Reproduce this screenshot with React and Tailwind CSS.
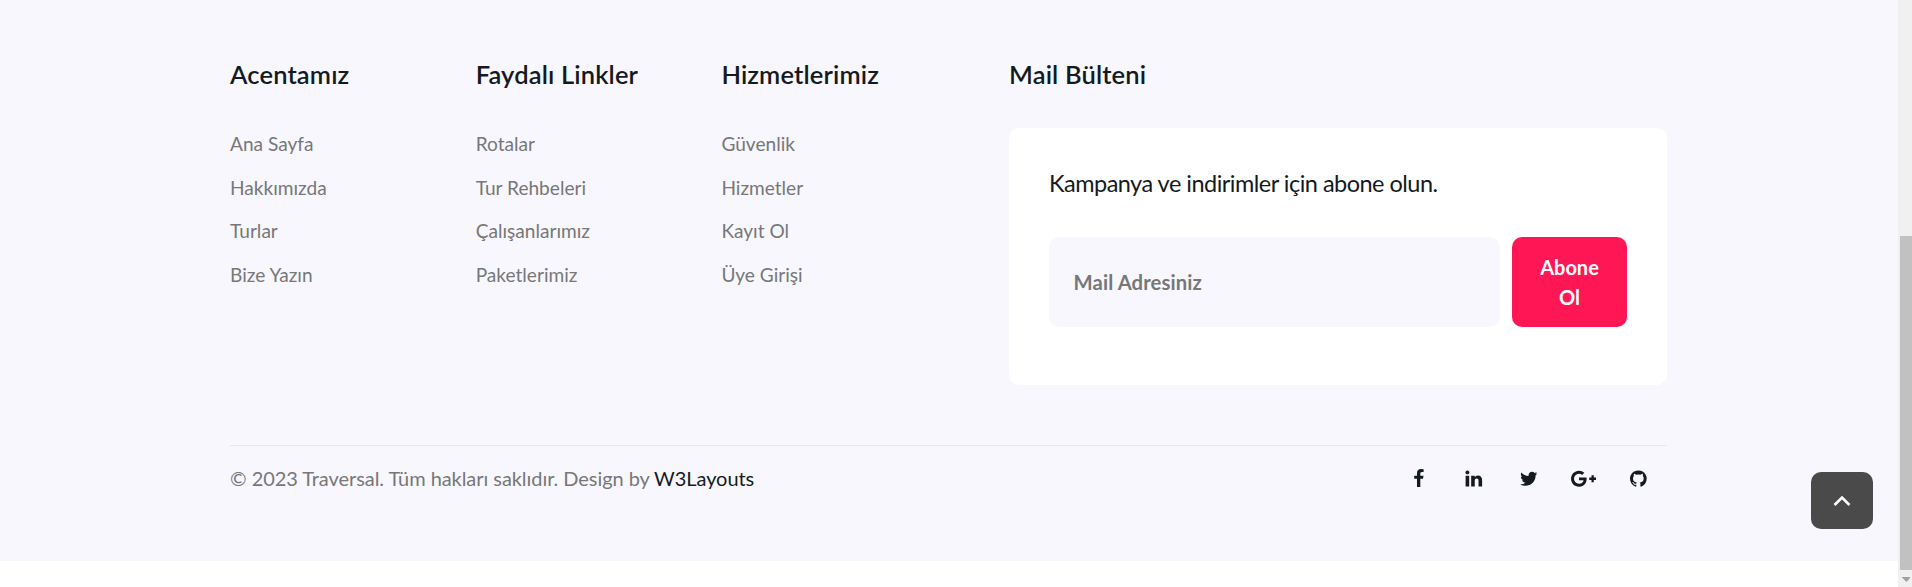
const columns = [
  { title: 'Acentamız', links: ['Ana Sayfa', 'Hakkımızda', 'Turlar', 'Bize Yazın'] },
  { title: 'Faydalı Linkler', links: ['Rotalar', 'Tur Rehbeleri', 'Çalışanlarımız', 'Paketlerimiz'] },
  { title: 'Hizmetlerimiz', links: ['Güvenlik', 'Hizmetler', 'Kayıt Ol', 'Üye Girişi'] },
];

const socials = [
  {
    name: 'Facebook',
    box: '0 0 1792 1792',
    d: 'M1343 12v264h-157q-86 0-116 36t-30 108v189h293l-39 296h-254v759H734V905H479V609h255V391q0-186 104-288.5T1115 0q147 0 228 12z',
  },
  {
    name: 'LinkedIn',
    box: '0 0 1792 1792',
    d: 'M477 625v991H147V625h330zm21-306q1 73-50.5 122T312 490h-2q-82 0-132-49t-50-122q0-74 51.5-122.5T314 148t133 48.5T498 319zm1166 729v568h-329v-530q0-105-40.5-164.5T1168 862q-63 0-105.5 34.5T999 982q-11 30-11 81v553H659q2-399 2-647t-1-296l-1-48h329v144h-2q20-32 41-56t56.5-52 87-43.5T1285 602q171 0 275 113.5t104 332.5z',
  },
  {
    name: 'Twitter',
    box: '0 0 1792 1792',
    d: 'M1684 408q-67 98-162 167 1 14 1 42 0 130-38 259.5T1369.5 1125 1185 1335.5t-258 146-323 54.5q-271 0-496-145 35 4 78 4 225 0 401-138-105-2-188-64.5T285 1033q33 5 61 5 43 0 85-11-112-23-185.5-111.5T172 710v-4q68 38 146 41-66-44-105-115t-39-154q0-88 44-163 121 149 294.5 238.5T884 653q-8-38-8-74 0-134 94.5-228.5T1199 256q140 0 236 102 109-21 205-78-37 115-142 178 93-10 186-50z',
  },
  {
    name: 'Google Plus',
    box: '0 0 2304 1792',
    d: 'M1437 913q0 208-87 370.5t-248 254-369 91.5q-149 0-285-58t-234-156-156-234-58-285 58-285 156-234 234-156 285-58q286 0 491 192L1025 546q-117-113-292-113-123 0-227.5 62T340 663.5t-61 232.5 61 232.5T505.5 1297t227.5 62q83 0 152.5-23t114.5-57.5 78.5-78.5 49-83 21.5-74H733V791h692q12 63 12 122zm867-122v210h-209v209h-210v-209h-209V791h209V582h210v209h209z',
  },
  {
    name: 'GitHub',
    box: '0 0 1536 1792',
    d: 'M768 128q209 0 385.5 103T1433 510.5T1536 896q0 251-146.5 451.5T1011 1625q-27 5-40-7t-13-30q0-3 .5-76.5t.5-134.5q0-97-52-142 57-6 102.5-18t94-39 81-66.5 53-105T1258 856q0-119-79-206 37-91-8-204-28-9-81 11t-92 44l-38 24q-93-26-192-26t-192 26q-16-11-42.5-27T450 459.5 365 446q-45 113-8 204-79 87-79 206 0 85 20.5 150t52.5 105 80.5 67 94 39 102.5 18q-39 36-49 103-21 10-45 15t-57 5-65.5-21.5T356 1274q-19-32-48.5-52t-49.5-24l-20-3q-21 0-29 4.5t-5 11.5 9 14 13 12l7 5q22 10 43.5 38t31.5 51l10 23q13 38 44 61.5t67 30 69.5 7 55.5-3.5l23-4q0 38 .5 88.5t.5 54.5q0 18-13 30t-40 7q-232-77-378.5-277.5T0 896q0-209 103-385.5T382.5 231 768 128z',
  },
];

function Heading({ children }) {
  return <h6 className="text-[25.5px] leading-[30px] font-semibold tracking-[0.14px] text-[#151a1e]">{children}</h6>;
}

function LinkColumn({ title, links }) {
  return (
    <div className="w-[245.7px]">
      <Heading>{title}</Heading>
      <ul className="mt-[33px] flex flex-col">
        {links.map((label) => (
          <li key={label} className="h-[43.6px] text-[19.1px] leading-[43.6px] text-[#777]">
            <a href="#">{label}</a>
          </li>
        ))}
      </ul>
    </div>
  );
}

function Newsletter() {
  return (
    <div className="ml-auto w-[658px]">
      <Heading>Mail Bülteni</Heading>
      <div className="mt-[39px] h-[257px] rounded-[10px] bg-white px-10 pt-10">
        <p className="text-[23.5px] leading-[30px] tracking-[-0.51px] text-[#151a1e]">Kampanya ve indirimler için abone olun.</p>
        <form className="mt-[39px] flex h-[90px] gap-3">
          <input
            type="email"
            placeholder="Mail Adresiniz"
            className="min-w-0 flex-1 rounded-[10px] bg-[#f8f7fe] px-[24.5px] text-[20.3px] font-bold tracking-[0.1px] placeholder:text-[#777]"
          />
          <button type="button" className="w-[115px] rounded-[10px] bg-[#ff1654] px-6 text-[20px] leading-[30px] font-bold text-white">
            Abone Ol
          </button>
        </form>
      </div>
    </div>
  );
}

function Scrollbar() {
  return (
    <div className="flex w-[14px] flex-col bg-[#f0f0f0] pl-[2px]">
      <div className="mt-[236px] h-[334px] bg-[#c1c1c1]" />
      <svg className="mt-[7px] ml-[2px] h-[5px] w-[8px]" viewBox="0 0 8 5">
        <path d="M0 0h8v1L4.5 5L0 .5z" fill="#a0a0a0" />
      </svg>
    </div>
  );
}

export default function App() {
  return (
    <div className="flex h-[587px] w-[1912px] overflow-hidden bg-white font-['Lato',sans-serif]">
      <div className="relative flex-1">
        <footer className="h-[561px] bg-[#f8f7fe] pt-[59px] pr-[231px] pl-[230px]">
          <div className="flex h-[386px]">
            {columns.map((c) => (
              <LinkColumn key={c.title} {...c} />
            ))}
            <Newsletter />
          </div>
          <div className="flex h-[66px] items-center justify-between border-t border-[#e8e7ec]">
            <p className="pb-0.5 text-[20px] leading-[30px] tracking-[-0.06px] text-[#777]">
              © 2023 Traversal. Tüm hakları saklıdır. Design by{' '}
              <a href="#" className="text-[#151a1e]">W3Layouts</a>
            </p>
            <ul className="mr-px flex">
              {socials.map((s) => (
                <li key={s.name} className="flex w-[55px] justify-center">
                  <a href="#" aria-label={s.name}>
                    <svg viewBox={s.box} className="h-[19.5px] w-auto" fill="#151a1e">
                      <path d={s.d} />
                    </svg>
                  </a>
                </li>
              ))}
            </ul>
          </div>
        </footer>
        <button
          type="button"
          aria-label="Top"
          className="absolute top-[472px] right-[25px] flex h-[57px] w-[62px] items-center justify-center rounded-[10px] bg-[#4a4a4b]"
        >
          <svg viewBox="0 0 18 12" className="h-3 w-[18px]" fill="none" stroke="#fff" strokeWidth="2.6">
            <path d="M1.5 10L9 2.6L16.5 10" />
          </svg>
        </button>
      </div>
      <Scrollbar />
    </div>
  );
}
